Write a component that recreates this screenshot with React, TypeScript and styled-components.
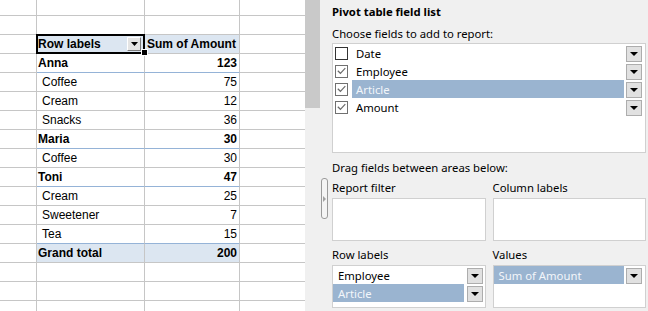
import React from "react";
import styled, { createGlobalStyle } from "styled-components";

const Global = createGlobalStyle`
  html, body { margin: 0; padding: 0; background: #fff; }
  body { width: 648px; height: 311px; overflow: hidden; }
`;

const Page = styled.div`
  display: flex;
  width: 648px;
  height: 311px;
  overflow: hidden;
`;

/* ---------------- Spreadsheet ---------------- */

const GRID = "#c6c6c6";
const BLUE_LINE = "#95b3d7";
const HEAD_BG = "#dce6f1";
const COLS = [37, 108, 95, 65];

const Sheet = styled.div`
  width: 305px;
  flex: none;
  display: flex;
  flex-direction: column;
  overflow: hidden;
  font-family: "Liberation Sans", Arial, sans-serif;
  font-size: 12px;
  color: #000;
`;

const SheetRow = styled.div<{ $h: number }>`
  display: flex;
  flex: none;
  height: ${(p) => p.$h}px;
`;

const Cell = styled.div<{
  $w: number;
  $bg?: string;
  $line?: string;
  $bold?: boolean;
  $right?: boolean;
  $pad?: number;
  $last?: boolean;
}>`
  box-sizing: border-box;
  width: ${(p) => p.$w}px;
  flex: none;
  height: 100%;
  border-bottom: 1px solid ${(p) => p.$line ?? GRID};
  border-right: ${(p) => (p.$last ? "none" : `1px solid ${GRID}`)};
  background: ${(p) => p.$bg ?? "transparent"};
  font-weight: ${(p) => (p.$bold ? 700 : 400)};
  text-align: ${(p) => (p.$right ? "right" : "left")};
  padding: 0 2px 0 ${(p) => p.$pad ?? 1}px;
  line-height: 18px;
  white-space: nowrap;
  overflow: hidden;
`;

const SelectedCell = styled(Cell)`
  position: relative;
  overflow: visible;
  display: flex;
  align-items: center;
  &::after {
    content: "";
    position: absolute;
    left: -1px;
    top: -1px;
    right: -1px;
    bottom: -1px;
    border: 2px solid #000;
    z-index: 1;
    pointer-events: none;
  }
`;

const FillHandle = styled.span`
  position: absolute;
  left: 104px;
  top: 14px;
  width: 5px;
  height: 5px;
  background: #000;
  border: 1px solid #fff;
  z-index: 2;
`;

const HeadText = styled.span`
  flex: 1;
`;

const CellButton = styled.span`
  box-sizing: border-box;
  width: 14px;
  height: 14px;
  margin-right: 1px;
  background: #e4e4e4;
  border: 1px solid #7c7c7c;
  border-top-color: #fff;
  border-left-color: #fff;
  display: flex;
  align-items: center;
  justify-content: center;
`;

type DataRow = { label: string; value: string; group?: boolean; sub?: boolean; before?: boolean; total?: boolean };

const DATA: DataRow[] = [
  { label: "Anna", value: "123", group: true },
  { label: "Coffee", value: "75", sub: true },
  { label: "Cream", value: "12", sub: true },
  { label: "Snacks", value: "36", sub: true },
  { label: "Maria", value: "30", group: true },
  { label: "Coffee", value: "30", sub: true },
  { label: "Toni", value: "47", group: true },
  { label: "Cream", value: "25", sub: true },
  { label: "Sweetener", value: "7", sub: true },
  { label: "Tea", value: "15", sub: true, before: true },
  { label: "Grand total", value: "200", total: true },
];

const Triangle = ({ w = 7, h = 4 }: { w?: number; h?: number }) => (
  <svg width={w} height={h} viewBox={`0 0 ${w} ${h}`}>
    <polygon points={`0,0 ${w},0 ${w / 2},${h}`} fill="#000" />
  </svg>
);

const BlankRow = ({ h }: { h: number }) => (
  <SheetRow $h={h}>
    {COLS.map((w, i) => (
      <Cell key={i} $w={w} $last={i === 3} />
    ))}
  </SheetRow>
);

const Spreadsheet = () => (
  <Sheet>
    <BlankRow h={16} />
    <BlankRow h={19} />
    <SheetRow $h={19}>
      <Cell $w={COLS[0]} />
      <SelectedCell $w={COLS[1]} $bg={HEAD_BG} $bold>
        <HeadText>Row labels</HeadText>
        <CellButton>
          <Triangle w={7} h={4} />
        </CellButton>
        <FillHandle />
      </SelectedCell>
      <Cell $w={COLS[2]} $bg={HEAD_BG} $bold $pad={2}>
        Sum of Amount
      </Cell>
      <Cell $w={COLS[3]} $last />
    </SheetRow>
    {DATA.map((r, i) => {
      const line = r.group || r.before ? BLUE_LINE : undefined;
      const bg = r.total ? HEAD_BG : undefined;
      const bold = r.group || r.total;
      return (
        <SheetRow $h={19} key={i}>
          <Cell $w={COLS[0]} />
          <Cell $w={COLS[1]} $line={line} $bg={bg} $bold={bold} $pad={r.sub ? 5 : 1}>
            {r.label}
          </Cell>
          <Cell $w={COLS[2]} $line={line} $bg={bg} $bold={bold} $right>
            {r.value}
          </Cell>
          <Cell $w={COLS[3]} $last />
        </SheetRow>
      );
    })}
    <BlankRow h={19} />
    <BlankRow h={19} />
    <BlankRow h={19} />
  </Sheet>
);

/* ---------------- Field list panel ---------------- */

const SEL = "#9ab4d0";

const Panel = styled.div`
  flex: 1;
  display: flex;
  position: relative;
  background: #f0f0f0;
  font-family: "Noto Sans", "Segoe UI", sans-serif;
  font-size: 11.3px;
  color: #000;
`;

const Gutter = styled.div`
  width: 15px;
  flex: none;
  display: flex;
  flex-direction: column;
`;

const Thumb = styled.div`
  height: 108px;
  background: #c9c9c9;
`;

const Content = styled.div`
  flex: 1;
  min-width: 0;
  padding: 0 2px 0 12px;
  display: flex;
  flex-direction: column;
`;

const Title = styled.div`
  height: 24px;
  line-height: 24px;
  font-weight: 700;
`;

const Label = styled.div<{ $h: number; $top?: number }>`
  height: ${(p) => p.$h}px;
  box-sizing: border-box;
  padding-top: ${(p) => p.$top ?? 0}px;
  line-height: ${(p) => p.$h - (p.$top ?? 0)}px;
  white-space: nowrap;
`;

const ListBox = styled.div<{ $h: number; $padL?: number; $padR?: number }>`
  box-sizing: border-box;
  height: ${(p) => p.$h}px;
  background: #fff;
  border: 1px solid #d0d0d0;
  padding: 0 ${(p) => p.$padR ?? 3}px 0 ${(p) => p.$padL ?? 0}px;
  display: flex;
  flex-direction: column;
`;

const ItemRow = styled.div<{ $gap?: number }>`
  display: flex;
  align-items: center;
  height: 18px;
  gap: ${(p) => p.$gap ?? 2}px;
`;

const ItemLabel = styled.div<{ $sel?: boolean; $pad?: number }>`
  flex: 1;
  align-self: stretch;
  display: flex;
  align-items: center;
  padding-left: ${(p) => p.$pad ?? 4}px;
  background: ${(p) => (p.$sel ? SEL : "transparent")};
  color: ${(p) => (p.$sel ? "#f3f6fa" : "#000")};
  white-space: nowrap;
`;

const Check = styled.div<{ $on?: boolean }>`
  box-sizing: border-box;
  width: 13px;
  height: 13px;
  flex: none;
  margin-right: 2px;
  background: #fff;
  border: 1px solid ${(p) => (p.$on ? "#707070" : "#333")};
  display: flex;
  align-items: center;
  justify-content: center;
`;

const DropBtn = styled.div`
  box-sizing: border-box;
  width: 16px;
  height: 16px;
  flex: none;
  align-self: flex-end;
  background: #e1e1e1;
  border: 1px solid #adadad;
  display: flex;
  align-items: center;
  justify-content: center;
`;

const Areas = styled.div`
  display: grid;
  grid-template-columns: 1fr 1fr;
  column-gap: 7px;
  row-gap: 4px;
`;

const Area = styled.div`
  display: flex;
  flex-direction: column;
  min-width: 0;
`;

const Grip = styled.div`
  position: absolute;
  left: 16px;
  top: 178px;
  box-sizing: border-box;
  width: 7px;
  height: 41px;
  border: 1px solid #9a9a9a;
  border-radius: 3px;
  background: #f4f4f4;
  display: flex;
  align-items: center;
  justify-content: center;
`;

const CheckMark = () => (
  <svg width="9" height="8" viewBox="0 0 9 8">
    <polyline points="0.8,3.8 3.4,6.3 8.3,1.2" fill="none" stroke="#6a6a6a" strokeWidth="1.2" />
  </svg>
);

const FIELDS = [
  { name: "Date", on: false },
  { name: "Employee", on: true },
  { name: "Article", on: true, sel: true },
  { name: "Amount", on: true },
];

const FieldPanel = () => (
  <Panel>
    <Gutter>
      <Thumb />
    </Gutter>
    <Grip>
      <svg width="3" height="6" viewBox="0 0 3 6">
        <polygon points="0,0 3,3 0,6" fill="#a0a0a0" />
      </svg>
    </Grip>
    <Content>
      <Title>Pivot table field list</Title>
      <Label $h={19}>Choose fields to add to report:</Label>
      <ListBox $h={110} $padL={2}>
        {FIELDS.map((f) => (
          <ItemRow key={f.name}>
            <Check $on={f.on}>{f.on && <CheckMark />}</Check>
            <ItemLabel $sel={f.sel}>{f.name}</ItemLabel>
            <DropBtn>
              <Triangle w={8} h={4} />
            </DropBtn>
          </ItemRow>
        ))}
      </ListBox>
      <Label $h={25} $top={4}>
        Drag fields between areas below:
      </Label>
      <Areas>
        <Area>
          <Label $h={20}>Report filter</Label>
          <ListBox $h={43} />
        </Area>
        <Area>
          <Label $h={20}>Column labels</Label>
          <ListBox $h={43} />
        </Area>
        <Area>
          <Label $h={20}>Row labels</Label>
          <ListBox $h={43} $padR={2}>
            <ItemRow $gap={3}>
              <ItemLabel $pad={5}>Employee</ItemLabel>
              <DropBtn>
                <Triangle w={8} h={4} />
              </DropBtn>
            </ItemRow>
            <ItemRow $gap={3}>
              <ItemLabel $pad={5} $sel>
                Article
              </ItemLabel>
              <DropBtn>
                <Triangle w={8} h={4} />
              </DropBtn>
            </ItemRow>
          </ListBox>
        </Area>
        <Area>
          <Label $h={20}>Values</Label>
          <ListBox $h={43}>
            <ItemRow>
              <ItemLabel $pad={5} $sel>
                Sum of Amount
              </ItemLabel>
              <DropBtn>
                <Triangle w={8} h={4} />
              </DropBtn>
            </ItemRow>
          </ListBox>
        </Area>
      </Areas>
    </Content>
  </Panel>
);

export default function App() {
  return (
    <>
      <Global />
      <Page>
        <Spreadsheet />
        <FieldPanel />
      </Page>
    </>
  );
}
